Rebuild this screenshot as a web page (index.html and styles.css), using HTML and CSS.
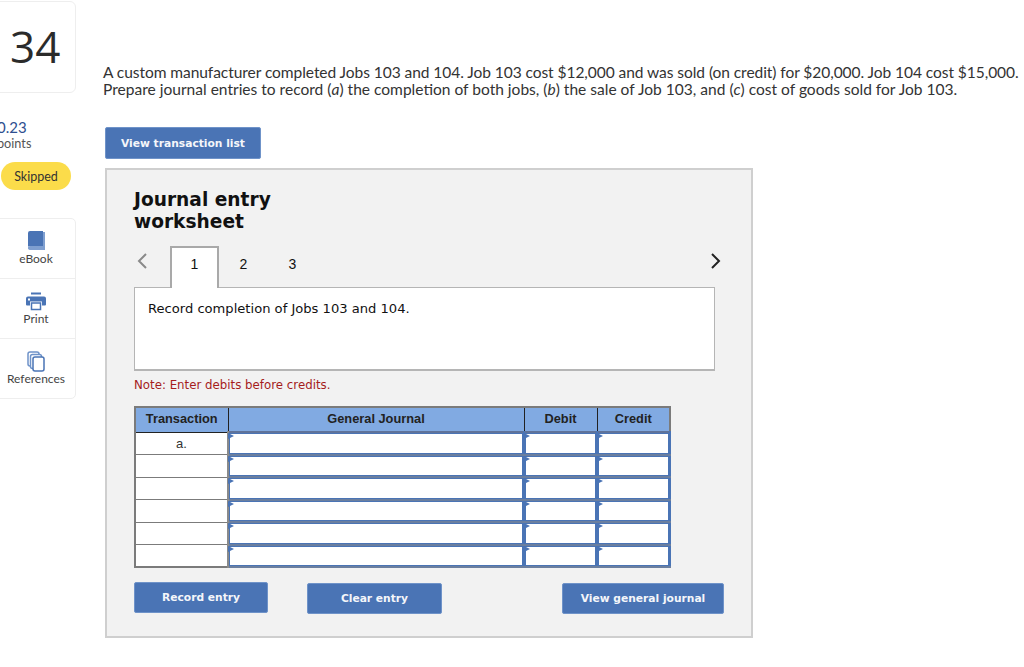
FILE: index.html
```html
<!DOCTYPE html>
<html lang="en">
<head>
  <meta charset="UTF-8" />
  <title>Journal entry worksheet</title>
  <link rel="stylesheet" href="styles.css">
</head>
<body>

<div class="page">
  <aside class="sidebar">
    <div class="question-number">34</div>
    <div class="score">
      <div class="score-value">0.23</div>
      <div class="score-label">points</div>
    </div>
    <div class="status-pill">Skipped</div>
    <nav class="tools">
      <a class="tool">
        <svg width="18" height="21" viewBox="0 0 18 21">
          <path d="M3 0h13v15H3a2 2 0 0 0-2 1V2a2 2 0 0 1 2-2z" fill="#4a74b5"/>
          <path d="M1 16.500a2 2 0 0 1 2-1.500h13V1h2v18H3a2 2 0 0 1-2-2.500z" fill="#7f9fd0"/>
        </svg>
        <span>eBook</span>
      </a>
      <a class="tool">
        <svg width="20" height="18" viewBox="0 0 20 18">
          <rect x="5" y="0" width="10" height="2" fill="#4a74b5"/>
          <path d="M2 4h16a2 2 0 0 1 2 2v6a1 1 0 0 1-1 1h-3V9H4v4H1a1 1 0 0 1-1-1V6a2 2 0 0 1 2-2z" fill="#4a74b5"/>
          <rect x="2" y="6" width="2" height="2" fill="#fff"/>
          <rect x="5.500" y="10.500" width="9" height="6.500" fill="#fff" stroke="#4a74b5" stroke-width="1.500"/>
        </svg>
        <span>Print</span>
      </a>
      <a class="tool">
        <svg width="18" height="21" viewBox="0 0 18 21" fill="#fff" stroke="#6f93c9" stroke-width="1.500">
          <rect x="1" y="1" width="11" height="14" rx="2"/>
          <rect x="3.500" y="3.500" width="11" height="14" rx="2"/>
          <rect x="6" y="6" width="11" height="14" rx="2" stroke="#4a74b5"/>
        </svg>
        <span>References</span>
      </a>
    </nav>
  </aside>

  <main class="content">
    <p class="question">A custom manufacturer completed Jobs 103 and 104. Job 103 cost $12,000 and was sold (on credit) for $20,000. Job 104 cost $15,000.<br>Prepare journal entries to record (<i>a</i>) the completion of both jobs, (<i>b</i>) the sale of Job 103, and (<i>c</i>) cost of goods sold for Job 103.</p>

    <button class="btn btn-list">View transaction list</button>

    <section class="worksheet">
      <h2>Journal entry<br>worksheet</h2>

      <div class="tabs">
        <svg class="chevron" width="12" height="18" viewBox="0 0 12 18" fill="none" stroke="#8a8a8a" stroke-width="2"><path d="M10 2 3 9l7 7"/></svg>
        <div class="tab active">1</div>
        <div class="tab">2</div>
        <div class="tab">3</div>
        <svg class="chevron next" width="12" height="18" viewBox="0 0 12 18" fill="none" stroke="#222" stroke-width="2"><path d="m2 2 7 7-7 7"/></svg>
      </div>

      <div class="tab-panel">Record completion of Jobs 103 and 104.</div>
      <p class="note">Note: Enter debits before credits.</p>

      <table class="journal">
        <thead>
          <tr>
            <th class="col-trans">Transaction</th>
            <th class="col-journal">General Journal</th>
            <th class="col-debit">Debit</th>
            <th class="col-credit">Credit</th>
          </tr>
        </thead>
        <tbody>
          <tr><td class="trans">a.</td><td class="entry"></td><td class="entry"></td><td class="entry"></td></tr>
          <tr><td class="trans"></td><td class="entry"></td><td class="entry"></td><td class="entry"></td></tr>
          <tr><td class="trans"></td><td class="entry"></td><td class="entry"></td><td class="entry"></td></tr>
          <tr><td class="trans"></td><td class="entry"></td><td class="entry"></td><td class="entry"></td></tr>
          <tr><td class="trans"></td><td class="entry"></td><td class="entry"></td><td class="entry"></td></tr>
          <tr><td class="trans"></td><td class="entry"></td><td class="entry"></td><td class="entry"></td></tr>
        </tbody>
      </table>

      <div class="actions">
        <button class="btn btn-record">Record entry</button>
        <button class="btn btn-clear">Clear entry</button>
        <button class="btn btn-journal">View general journal</button>
      </div>
    </section>
  </main>
</div>

</body>
</html>
```

FILE: styles.css
```css
:root {
  --blue: #4a74b5;
  --head-blue: #81aae2;
  --grid: #7b7b7b;
  --text: #333333;
}

* {
  margin: 0;
  padding: 0;
  box-sizing: border-box;
}

body {
  background: #fff;
  color: var(--text);
  font-family: 'Lato', sans-serif;
  overflow: hidden;
}

.page {
  display: flex;
  height: 667px;
}

/* left column, its cards run off the window edge */
.sidebar {
  width: 103px;
  flex-shrink: 0;
  padding-top: 1px;
}

.question-number {
  width: 86px;
  height: 92px;
  margin-left: -10px;
  padding: 18px 0 0 19px;
  border: 1px solid #eeeeee;
  border-radius: 6px;
  font-family: 'Open Sans', sans-serif;
  font-size: 44px;
  line-height: 52px;
  color: #2b2b2b;
}

.score {
  margin: 25px 0 0 -3px;
}

.score-value {
  font-size: 15px;
  line-height: 18px;
  color: #2f4f8f;
}

.score-label {
  font-size: 12.700px;
  line-height: 15px;
  color: #555;
}

.status-pill {
  width: 70px;
  height: 28px;
  margin: 11px 0 0 1px;
  padding-top: 1px;
  border-radius: 14px;
  background: #fbdc4a;
  font-size: 12.500px;
  line-height: 28px;
  text-align: center;
}

.tools {
  width: 86px;
  margin: 28px 0 0 -10px;
  border: 1px solid #eeeeee;
  border-radius: 5px;
}

.tool {
  display: flex;
  flex-direction: column;
  align-items: center;
  height: 60px;
  padding: 12px 0 0 6px;
  font-size: 12px;
  line-height: 14px;
  color: #444;
}

.tool:first-child {
  height: 59px;
}

.tool + .tool {
  border-top: 1px solid #eeeeee;
}

.tool svg {
  height: 21px;
}

.content {
  flex: 1;
  padding-top: 64px;
}

.question {
  font-size: 15.560px;
  line-height: 17px;
  white-space: nowrap;
  color: #333;
}

/* this line is full of digits, which run wide in this font */
.question::first-line {
  letter-spacing: -0.07px;
}

.btn {
  display: block;
  height: 31px;
  border: 1px solid #6f93c9;
  border-radius: 2px;
  background: var(--blue);
  color: #f4f6fa;
  font-family: 'DejaVu Sans', sans-serif;
  font-size: 10.700px;
  font-weight: bold;
}

.btn-list {
  width: 156px;
  height: 32px;
  margin: 29px 0 0 2px;
}

.worksheet {
  width: 648px;
  height: 470px;
  margin: 9px 0 0 2px;
  padding: 19px 0 0 27px;
  border: 2px solid #cfcfcf;
  background: #f2f2f2;
  font-family: 'DejaVu Sans', sans-serif;
  color: #111;
}

.worksheet h2 {
  font-size: 18.600px;
  line-height: 22px;
  font-weight: bold;
}

.tabs {
  display: flex;
  align-items: center;
  width: 588px;
  height: 41px;
  margin-top: 13px;
  font-family: 'Liberation Sans', sans-serif;
  font-size: 14px;
}

.chevron {
  margin: -11px 0 0 2px;
}

.chevron.next {
  margin-left: auto;
}

.tab {
  width: 49px;
  height: 41px;
  line-height: 36px;
  text-align: center;
}

.tabs .chevron:first-child + .tab {
  margin-left: 22px;
}

.tab.active {
  position: relative;
  background: #fff;
  border: 2px solid #a9a9a9;
  border-bottom: 0;
  line-height: 32px;
  margin-bottom: -1px;
  height: 42px;
  z-index: 1;
}

.tab-panel {
  width: 581px;
  height: 84px;
  padding: 12px 13px;
  border: 1px solid #b5b5b5;
  border-bottom-width: 2px;
  background: #fff;
  font-size: 13.100px;
  line-height: 18px;
}

.note {
  margin-top: 7px;
  font-size: 11.800px;
  line-height: 14px;
  color: #a51c1c;
}

.journal {
  width: 535px;
  margin-top: 14px;
  table-layout: fixed;
  border-collapse: collapse;
  font-family: 'Liberation Sans', sans-serif;
  border: 2px solid var(--grid);
}

.journal th {
  height: 25px;
  padding-bottom: 2px;
  background: var(--head-blue);
  border: 1px solid #222;
  border-top: 2px solid var(--grid);
  font-size: 12.800px;
  color: #222;
}

.col-trans {
  width: 93px;
}

.col-journal {
  width: 296px;
}

.col-debit {
  width: 73px;
}

.col-credit {
  width: 73px;
}

.journal td {
  height: 22.500px;
}

.trans {
  padding-top: 1px;
  border: 1px solid var(--grid);
  border-right: 2px solid #8a8a8a;
  background: #fff;
  text-align: center;
  font-size: 13px;
  line-height: 14px;
  color: #333;
}

.entry {
  position: relative;
  background: #fff;
  border: 2px solid var(--blue);
  border-top-color: #5f739a;
  border-bottom-color: #6b7f9f;
  box-shadow: inset 0 0 0 1px var(--blue);
}

/* little marker in the corner of each entry cell */
.entry::before {
  content: "";
  position: absolute;
  top: 0;
  left: -1px;
  border-left: 6px solid var(--blue);
  border-top: 3.500px solid transparent;
  border-bottom: 3.500px solid transparent;
}

.actions {
  display: flex;
  margin-top: 14px;
}

.btn-record {
  width: 134px;
}

.btn-clear {
  width: 135px;
  margin: 1px 0 0 39px;
}

.btn-journal {
  width: 162px;
  margin: 1px 0 0 120px;
}
```
